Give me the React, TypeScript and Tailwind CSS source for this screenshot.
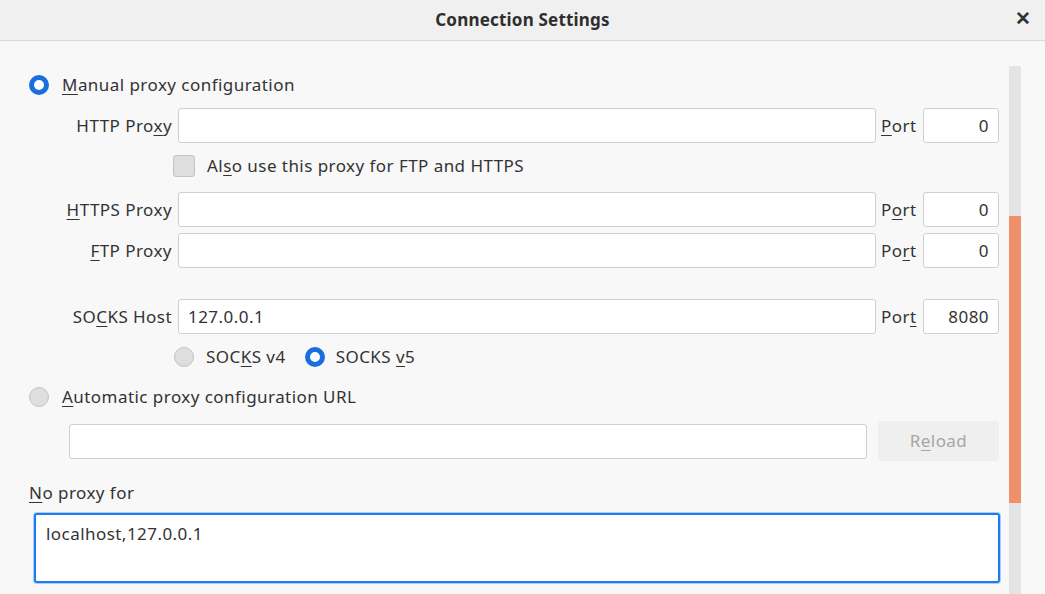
import React from "react";

function Radio({ checked }: { checked?: boolean }) {
  return checked ? (
    <span className="box-border block h-[20px] w-[20px] shrink-0 rounded-full border-[5px] border-[#1a6fe0] bg-white" />
  ) : (
    <span className="box-border block h-[20px] w-[20px] shrink-0 rounded-full border border-[#c4c4c4] bg-[#dedede]" />
  );
}

function TextInput({ value, className = "" }: { value?: string; className?: string }) {
  return (
    <div
      className={`flex h-[35px] items-center rounded-[3px] border border-[#cfcfcf] bg-white px-[9px] ${className}`}
    >
      {value}
    </div>
  );
}

function ProxyRow({
  label,
  value,
  port,
  portLabel,
}: {
  label: React.ReactNode;
  value?: string;
  port: string;
  portLabel: React.ReactNode;
}) {
  return (
    <div className="flex h-[35px] items-center">
      <div className="flex w-[149px] justify-end pr-[6px]">{label}</div>
      <TextInput value={value} className="flex-1" />
      <div className="w-[47px] pl-[5px]">{portLabel}</div>
      <TextInput className="w-[76px] justify-end" value={port} />
    </div>
  );
}

const U = ({ children }: { children: React.ReactNode }) => (
  <span className="underline decoration-1 underline-offset-[3px]">{children}</span>
);

export default function App() {
  return (
    <div
      className="flex h-[594px] w-[1045px] flex-col overflow-hidden bg-[#f8f8f8] text-[17px] tracking-[0.45px] text-[#333333]"
      style={{ fontFamily: '"Noto Sans", "Open Sans", sans-serif' }}
    >
      <div className="relative flex h-[41px] shrink-0 items-center justify-center border-b border-[#dadada] bg-[#f0f0f0]">
        <span className="font-bold tracking-[0.2px] text-[#2e2e2e]">Connection Settings</span>
        <span className="absolute right-[14px] top-[9px] text-[19px] font-bold leading-none text-[#333]">✕</span>
      </div>

      <div className="flex flex-1">
        <div className="flex flex-1 flex-col pl-[29px] pr-[10px]">
          <div className="mt-[32px] flex h-[24px] items-center gap-[13px]">
            <Radio checked />
            <span>
              <U>M</U>anual proxy configuration
            </span>
          </div>

          <div className="mt-[11px]">
            <ProxyRow
              label={
                <span>
                  HTTP Pro<U>x</U>y
                </span>
              }
              port="0"
              portLabel={
                <span>
                  <U>P</U>ort
                </span>
              }
            />
          </div>

          <div className="mt-[11px] flex h-[24px] items-center gap-[12px] pl-[144px]">
            <span className="box-border block h-[22px] w-[22px] rounded-[3px] border border-[#c4c4c4] bg-[#dedede]" />
            <span>
              Al<U>s</U>o use this proxy for FTP and HTTPS
            </span>
          </div>

          <div className="mt-[14px]">
            <ProxyRow
              label={
                <span>
                  <U>H</U>TTPS Proxy
                </span>
              }
              port="0"
              portLabel={
                <span>
                  P<U>o</U>rt
                </span>
              }
            />
          </div>
          <div className="mt-[6px]">
            <ProxyRow
              label={
                <span>
                  <U>F</U>TP Proxy
                </span>
              }
              port="0"
              portLabel={
                <span>
                  Po<U>r</U>t
                </span>
              }
            />
          </div>

          <div className="mt-[31px]">
            <ProxyRow
              label={
                <span>
                  SO<U>C</U>KS Host
                </span>
              }
              value="127.0.0.1"
              port="8080"
              portLabel={
                <span>
                  Por<U>t</U>
                </span>
              }
            />
          </div>

          <div className="mt-[11px] flex h-[24px] items-center pl-[145px]">
            <Radio />
            <span className="ml-[12px]">
              SOC<U>K</U>S v4
            </span>
            <span className="ml-[19px]">
              <Radio checked />
            </span>
            <span className="ml-[11px]">
              SOCKS <U>v</U>5
            </span>
          </div>

          <div className="mt-[16px] flex h-[24px] items-center gap-[13px]">
            <Radio />
            <span>
              <U>A</U>utomatic proxy configuration URL
            </span>
          </div>

          <div className="mt-[12px] flex h-[40px] items-center pl-[40px]">
            <TextInput className="flex-1" />
            <div className="ml-[11px] flex h-[40px] w-[121px] items-center justify-center rounded-[4px] bg-[#efefef] text-[#a6a6a6]">
              <span>
                R<U>e</U>load
              </span>
            </div>
          </div>

          <div className="mt-[20px] flex h-[24px] items-center">
            <span>
              <U>N</U>o proxy for
            </span>
          </div>

          <div className="ml-[4px] mr-[-2px] mt-[7px] h-[72px] rounded-[4px] bg-[#a9cdf8] p-[1px]">
            <div className="h-full rounded-[3px] border-2 border-[#1d7cf2] bg-white px-[10px] pt-[6px]">
              localhost,127.0.0.1
            </div>
          </div>
        </div>

        <div className="mt-[25px] flex w-[12px] shrink-0 flex-col">
          <div className="h-[150px] bg-[#e4e4e4]" />
          <div className="h-[287px] bg-[#f0906a]" />
          <div className="flex-1 bg-[#e4e4e4]" />
        </div>
        <div className="w-[24px] shrink-0" />
      </div>
    </div>
  );
}
